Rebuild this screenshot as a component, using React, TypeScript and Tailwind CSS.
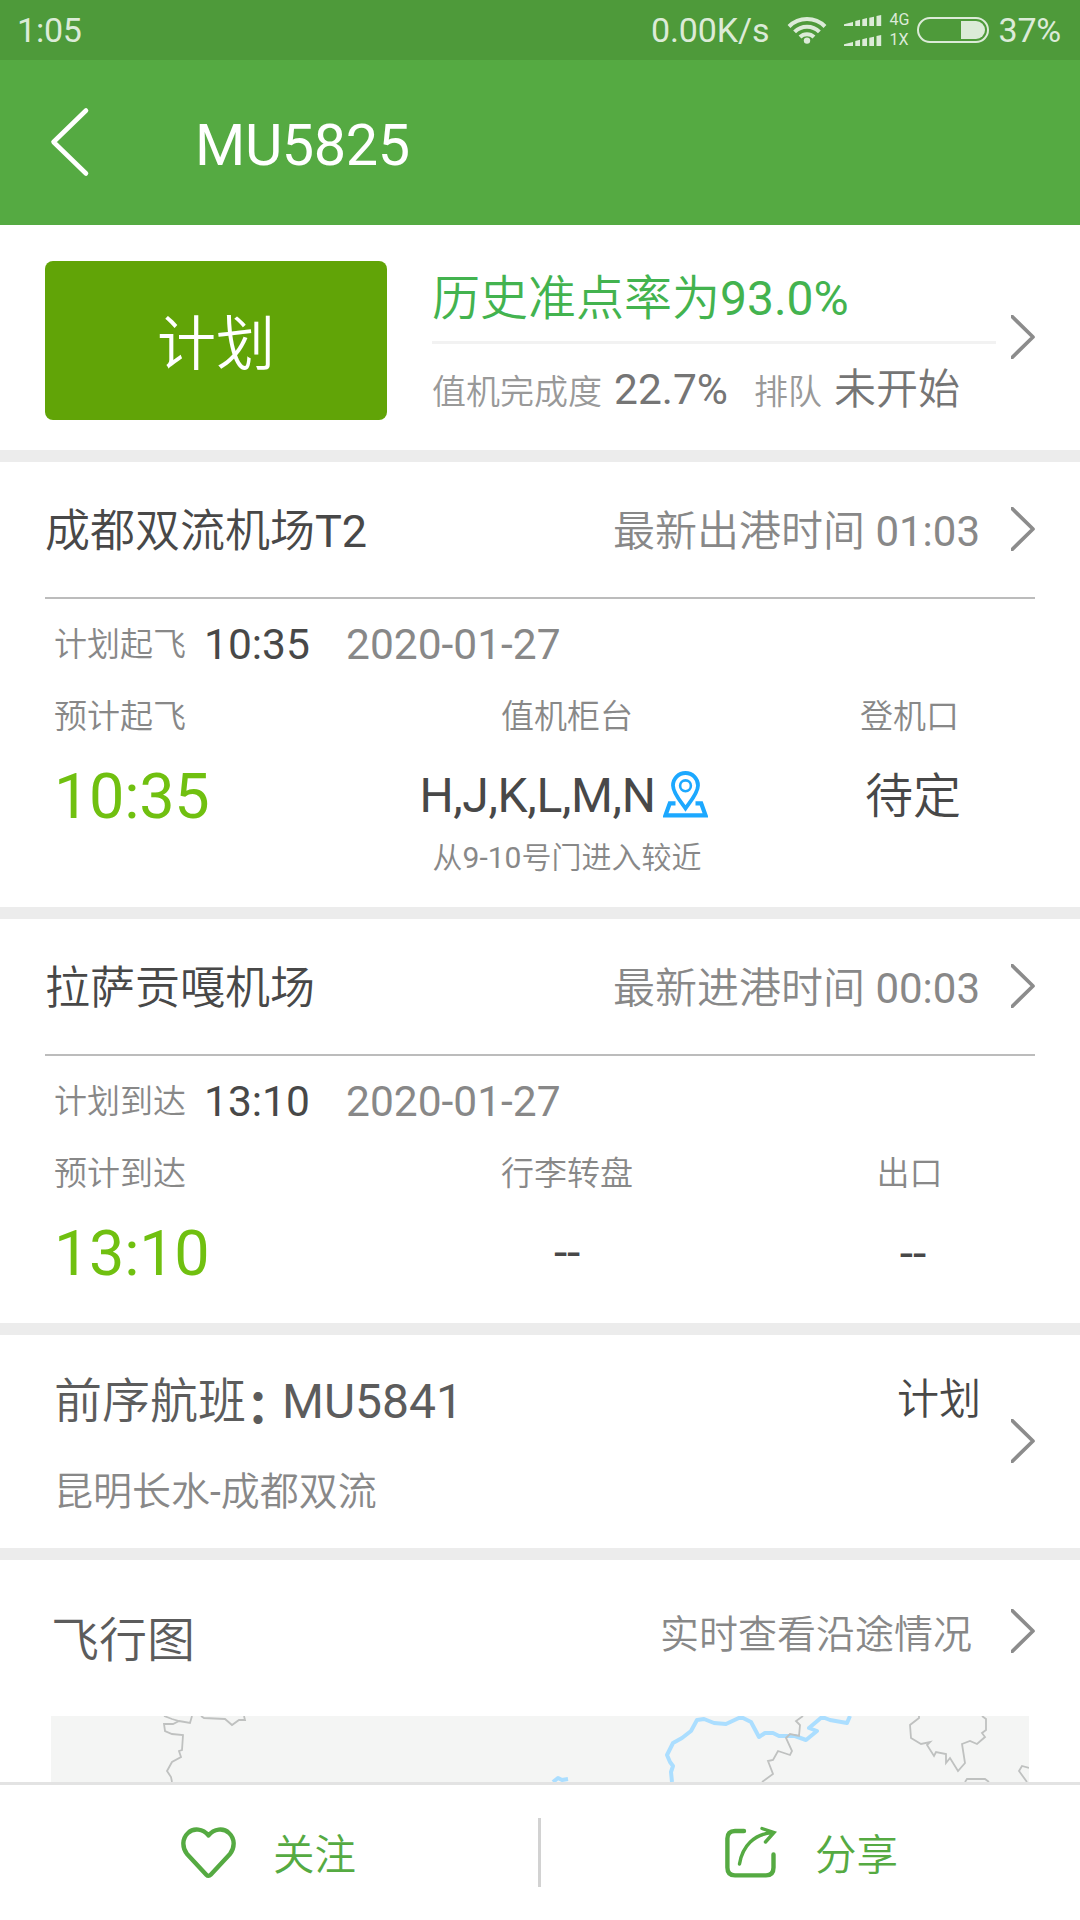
import type { ReactNode } from "react";

function Chevron({ className = "" }: { className?: string }) {
  return (
    <svg className={`h-11 w-6 shrink-0 ${className}`} viewBox="0 0 24 44" fill="none" stroke="#8c8c8c" strokeWidth="3.7" strokeLinejoin="round">
      <path d="M-1 -0.5 L22 22 L-1 44.500" />
    </svg>
  );
}

function Bars({ className = "" }: { className?: string }) {
  return (
    <svg className={className} width="38" height="11" viewBox="0 0 38 11" fill="#dcebd8">
      <path d="M0 9.2 L9 7 V11 H0Z M11.3 6 L16 4.8 V11 H11.3Z M18.3 4.2 L23 3 V11 H18.3Z M25.3 2.8 L30 1.8 V11 H25.3Z M32.5 1 L37.2 0 V11 H32.5Z" />
    </svg>
  );
}

function StatusBar() {
  return (
    <div className="flex h-[60px] shrink-0 items-center bg-[#4e9a3a] pl-[17px] pr-[19px] text-[34px] leading-none text-[#dcebd8]">
      <span className="tracking-[-0.2px]">1:05</span>
      <span className="ml-auto tracking-[-0.1px]">0.00K/s</span>
      <svg className="ml-[18px]" width="40" height="28" viewBox="0 0 40 28" fill="none" stroke="#dcebd8" strokeWidth="4">
        <path d="M2 10.5 A25.5 25.5 0 0 1 38 10.5" />
        <path d="M7.6 15.8 A17.6 17.6 0 0 1 32.4 15.8" />
        <path d="M13 21 A10 10 0 0 1 27 21" />
        <circle cx="20" cy="24.6" r="3.2" fill="#dcebd8" stroke="none" />
      </svg>
      <div className="ml-[17px] flex flex-col gap-[9px]">
        <Bars />
        <Bars />
      </div>
      <div className="ml-[7px] mr-[1px] flex w-[27px] flex-col gap-[4px] text-[16px] leading-[16px]">
        <span>4G</span>
        <span>1X</span>
      </div>
      <svg width="72" height="26" viewBox="0 0 72 26" fill="none">
        <rect x="1" y="1" width="70" height="24" rx="12" stroke="#dcebd8" strokeWidth="2" />
        <path d="M44 4 H59 A9 9 0 0 1 59 22 H44Z" fill="#dcebd8" />
      </svg>
      <span className="ml-[9px] tracking-[-0.2px]">37%</span>
    </div>
  );
}

function PinIcon() {
  return (
    <svg className="-mt-[2px] ml-[7px] mr-[7px] h-[47px] w-[45px]" viewBox="0 0 45 47" fill="none" stroke="#1ca8ff">
      <path d="M22.5 37.5 C18 31 10 22 10 14.5 A12.500 12.500 0 0 1 35 14.5 C35 22 27 31 22.5 37.5Z" strokeWidth="3.8" />
      <circle cx="22.5" cy="14.8" r="5.4" strokeWidth="2.6" />
      <path d="M12.500 32.3 H6.800 L2.500 44.3 H42.500 L38.200 32.3 H32.500" strokeWidth="4.200" />
    </svg>
  );
}

type AirportProps = {
  name: string;
  update: string;
  planLabel: string;
  plan: string;
  estLabel: string;
  est: string;
  midLabel: string;
  mid: ReactNode;
  note?: string;
  endLabel: string;
  end: string;
  height: string;
};

function Airport(p: AirportProps) {
  return (
    <section className={`shrink-0 border-b-12 border-[#ececec] ${p.height}`}>
      <div className="mx-[45px] flex h-[137px] items-center border-b-2 border-[#bcbcbc] leading-none">
        <h2 className="pt-1 text-[45px] text-[#484848]">{p.name}</h2>
        <span className="ml-auto mr-[31px] pt-1 text-[42px] text-[#888]">{p.update}</span>
        <Chevron className="mb-[2px]" />
      </div>
      <div className="flex items-start pl-[54px] pt-[25px] text-[42.500px] leading-none text-[#888]">
        <span className="w-[150px] pt-[4px] text-[33px]">{p.planLabel}</span>
        <span className="w-[142px] text-[#484848]">{p.plan}</span>
        <span>2020-01-27</span>
      </div>
      <div className="mt-[33px] flex pl-[54px] pr-[45px] text-[33px] leading-none text-[#888]">
        <div className="flex w-[333px] flex-col gap-[32px]">
          <span>{p.estLabel}</span>
          <span className="text-[63px] tracking-[-0.300px] text-[#70c010]">{p.est}</span>
        </div>
        <div className="flex w-[360px] flex-col items-center">
          <span>{p.midLabel}</span>
          <div className="mt-[39px] flex h-12 items-center text-[48px] tracking-[-0.350px] text-[#484848]">{p.mid}</div>
          {p.note && <span className="mt-[23px] text-[30px]">{p.note}</span>}
        </div>
        <div className="ml-auto flex w-[246px] flex-col items-center gap-[40px]">
          <span className="pr-[5px]">{p.endLabel}</span>
          <span className="pl-[2px] text-[48px] text-[#484848]">{p.end}</span>
        </div>
      </div>
    </section>
  );
}

function FlightMap() {
  return (
    <svg className="ml-[51px] mt-[52px] block bg-[#f4f5f4]" width="978" height="66" viewBox="51 1716 978 66" fill="none">
      <g stroke="#bfc1c0" strokeWidth="1.8">
        <path d="M164 1716 L172 1719 L179 1721 L190 1723 L192 1716 M179 1721 L173 1724 L164 1724 L165 1731 L172 1734 L183 1735 L182 1750 L179 1751 L181 1757 L172 1762 L167 1771 L171 1777 L172 1782" />
        <path d="M201 1716 L204 1718 L225 1719 L232 1725 L239 1720 L245 1720 L244 1716" />
        <path d="M919 1716 L919 1718 L910 1725 L911 1738 L921 1744 L930 1742 L927 1745 L934 1756 L936 1752 L946 1754 L946 1763 L950 1758 L958 1771 L965 1763 L962 1744 L970 1741 L977 1744 L985 1737 L982 1733 L986 1730 L986 1719 L982 1716" />
        <path d="M965 1782 L967 1779 L985 1779 L989 1782" />
        <path d="M1029 1768 L1022 1766 L1019 1771 L1027 1782" />
      </g>
      <g stroke="#abdeff" strokeWidth="4" strokeLinejoin="round">
        <path d="M672 1782 L671 1772 L673 1766 L670 1762 L667 1755 L673 1743 L682 1738 L691 1731 L697 1720 L704 1719 L714 1723 L726 1724 L741 1717 L751 1722 L759 1737 L765 1733 L773 1733 L779 1736 L795 1736 L806 1740 L817 1731 L809 1728 L822 1717 L830 1720 L847 1723 L850 1716" />
        <path d="M553 1782 L558 1778 L562 1780 L568 1779" />
      </g>
      <path d="M803 1716 L796 1721 L800 1725 L799 1736 L790 1734 L786 1738 L792 1751 L790 1755 L778 1751 L773 1760 L768 1761 L773 1774 L762 1782" stroke="#bfc1c0" strokeWidth="1.8" />
    </svg>
  );
}

function Footer() {
  return (
    <footer className="mt-auto flex h-[138px] shrink-0 border-t-3 border-[#e3e3e3] bg-white text-[41.500px] leading-none text-[#55aa42]">
      <button className="flex w-[538px] items-start pl-[181px] pt-[41px]">
        <svg width="56" height="54" viewBox="0 0 56 54" fill="none" stroke="#55aa42" strokeWidth="4.4" strokeLinejoin="round">
          <path d="M27.500 9.500 C22 2.500 12.500 1.500 7 7 C1.200 12.500 0.800 21 6 28 L25.300 48.700 Q27.500 51 29.700 48.700 L49 28 C54.200 21 53.800 12.500 48 7 C42.500 1.500 33 2.500 27.500 9.500Z" />
        </svg>
        <span className="ml-[36px] mt-[9px]">关注</span>
      </button>
      <div className="mt-[33px] h-[69px] w-[3px] bg-[#d2d2d2]" />
      <button className="flex items-start pl-[184px] pt-[41px]">
        <svg width="52" height="54" viewBox="0 0 52 54" fill="none" stroke="#55aa42" strokeWidth="4.4" strokeLinecap="round">
          <path d="M19 5 H10 Q2.400 5 2.400 12.500 V41.500 Q2.400 49.400 10 49.400 H41 Q48.500 49.400 48.500 41.500 V28.500" />
          <path d="M14.500 38 C17.500 20 29 8 48 6.500 M37 2.500 L49 6.500 L40.500 16" strokeWidth="3.400" />
        </svg>
        <span className="ml-[38px] mt-[9px]">分享</span>
      </button>
    </footer>
  );
}

export default function App() {
  return (
    <div lang="zh-CN" className="flex h-[1920px] w-[1080px] flex-col overflow-hidden bg-white font-['Roboto','Noto_Sans_CJK_SC_DemiLight','Noto_Sans_CJK_SC_Light','Noto_Sans_CJK_SC',sans-serif] font-normal">
      <StatusBar />
      <header className="flex h-[165px] shrink-0 bg-[#55aa42] text-white">
        <svg className="ml-[49px] mt-[46px]" width="42" height="72" viewBox="0 0 42 72" fill="none" stroke="white" strokeWidth="4.600" strokeLinecap="round" strokeLinejoin="round">
          <path d="M37 4.500 L4.500 36 L37 67.500" />
        </svg>
        <h1 className="ml-[104px] mt-[57px] text-[57.600px] leading-none tracking-[-0.400px]">MU5825</h1>
      </header>

      <section className="flex h-[237px] shrink-0 items-start border-b-12 border-[#ececec] pl-[45px] leading-none">
        <div className="mt-9 flex h-[159px] w-[342px] items-center justify-center rounded-lg bg-[#61a407] pt-[7px] text-[59px] text-white">计划</div>
        <div className="ml-[45px] w-[564px] pt-[50px]">
          <p className="text-[48px] text-[#43b34f]">历史准点率为93.0%</p>
          <div className="mt-[18px] h-[3px] bg-[#f2f2f2]" />
          <div className="mt-[25px] flex items-baseline whitespace-nowrap text-[34px] text-[#999]">
            <span>值机完成度</span>
            <span className="ml-[12px] text-[42.500px] text-[#757575]">22.7%</span>
            <span className="ml-[26px]">排队</span>
            <span className="ml-[12px] text-[42px] text-[#757575]">未开始</span>
          </div>
        </div>
        <Chevron className="ml-[15px] mt-[90px]" />
      </section>

      <Airport
        height="h-[457px]"
        name="成都双流机场T2"
        update="最新出港时间 01:03"
        planLabel="计划起飞"
        plan="10:35"
        estLabel="预计起飞"
        est="10:35"
        midLabel="值机柜台"
        mid={<><span>H,J,K,L,M,N</span><PinIcon /></>}
        note="从9-10号门进入较近"
        endLabel="登机口"
        end="待定"
      />
      <Airport
        height="h-[416px]"
        name="拉萨贡嘎机场"
        update="最新进港时间 00:03"
        planLabel="计划到达"
        plan="13:10"
        estLabel="预计到达"
        est="13:10"
        midLabel="行李转盘"
        mid="--"
        endLabel="出口"
        end="--"
      />

      <section className="flex h-[225px] shrink-0 items-start border-b-12 border-[#ececec] pl-[54px] pr-[45px] leading-none">
        <div className="pt-[43px]">
          <h2 className="flex text-[48px] text-[#5c5c5c]">
            <span>前序航班</span>
            <span className="w-9 font-['Noto_Sans_CJK_SC'] font-bold [font-feature-settings:'halt']">：</span>
            <span>MU5841</span>
          </h2>
          <p className="mt-[47px] text-[39px] text-[#888]">昆明长水-成都双流</p>
        </div>
        <span className="ml-auto mr-[30px] pt-[44px] text-[42px] text-[#484848]">计划</span>
        <Chevron className="mt-[84px]" />
      </section>

      <section>
        <div className="flex h-[104px] items-start pl-[51px] pr-[45px] leading-none">
          <h2 className="pt-[57px] text-[48px] text-[#5c5c5c]">飞行图</h2>
          <span className="ml-auto mr-[39px] pt-[56px] text-[39px] text-[#888]">实时查看沿途情况</span>
          <Chevron className="mt-[49px]" />
        </div>
        <FlightMap />
      </section>
      <Footer />
    </div>
  );
}
